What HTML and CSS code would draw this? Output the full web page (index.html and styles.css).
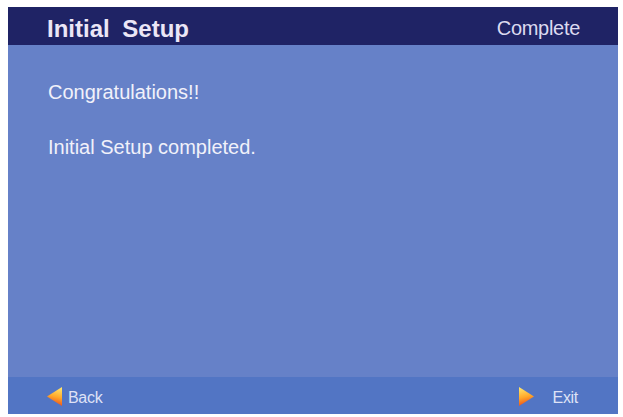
FILE: index.html
```html
<!DOCTYPE html>
<html>
<head>
<meta charset="utf-8">
<link rel="stylesheet" href="styles.css">
</head>
<body>
<div class="panel">
  <div class="header">
    <div class="title">Initial Setup</div>
    <div class="status">Complete</div>
  </div>
  <div class="content">
    <p class="line">Congratulations!!</p>
    <p class="line second">Initial Setup completed.</p>
  </div>
  <div class="footer">
    <div class="nav back">
      <svg class="arrow" width="15" height="19" viewBox="0 0 15 19">
        <defs>
          <linearGradient id="gl" x1="0.6" y1="0" x2="0.4" y2="1">
            <stop offset="0" stop-color="#ffe36a"/>
            <stop offset="0.5" stop-color="#ffa82a"/>
            <stop offset="1" stop-color="#e8401a"/>
          </linearGradient>
        </defs>
        <polygon points="0,9.5 15,0 15,19" fill="url(#gl)"/>
      </svg>
      <span class="label">Back</span>
    </div>
    <div class="nav exit">
      <svg class="arrow" width="15" height="19" viewBox="0 0 15 19">
        <defs>
          <linearGradient id="gr" x1="0.4" y1="0" x2="0.6" y2="1">
            <stop offset="0" stop-color="#ffe36a"/>
            <stop offset="0.5" stop-color="#ffa82a"/>
            <stop offset="1" stop-color="#e8401a"/>
          </linearGradient>
        </defs>
        <polygon points="15,9.5 0,0 0,19" fill="url(#gr)"/>
      </svg>
      <span class="label">Exit</span>
    </div>
  </div>
</div>
</body>
</html>
```
FILE: styles.css
```css
html, body {
  margin: 0;
  padding: 0;
  background: #ffffff;
}
body {
  font-family: "Liberation Sans", Arial, sans-serif;
}
.panel {
  margin: 7px 0 0 8px;
  width: 610px;
  height: 407px;
  display: flex;
  flex-direction: column;
  background: #6681c8;
}
.header {
  height: 38px;
  background: #1f2365;
  display: flex;
  align-items: center;
  justify-content: space-between;
  padding: 5px 38px 0 39px;
  box-sizing: border-box;
}
.title {
  font-size: 24px;
  font-weight: bold;
  color: #ebe6f6;
  word-spacing: 6px;
}
.status {
  font-size: 20px;
  color: #dcdaf0;
  letter-spacing: -0.3px;
}
.content {
  flex: 1;
  padding: 35px 0 0 40px;
  box-sizing: border-box;
}
.line {
  margin: 0;
  font-size: 20px;
  line-height: 24px;
  color: #f1f1fa;
}
.second {
  margin-top: 31px;
}
.footer {
  height: 37px;
  background: #5275c4;
  display: flex;
  justify-content: space-between;
  align-items: center;
  padding: 4px 40px 0 39px;
  box-sizing: border-box;
}
.nav {
  display: flex;
  align-items: center;
}
.back .arrow {
  margin-right: 6px;
}
.exit .arrow {
  margin-right: 19px;
}
.arrow {
  display: block;
  margin-top: -3px;
}
.label {
  font-size: 16px;
  color: #dfe2f6;
  letter-spacing: -0.3px;
}
```
